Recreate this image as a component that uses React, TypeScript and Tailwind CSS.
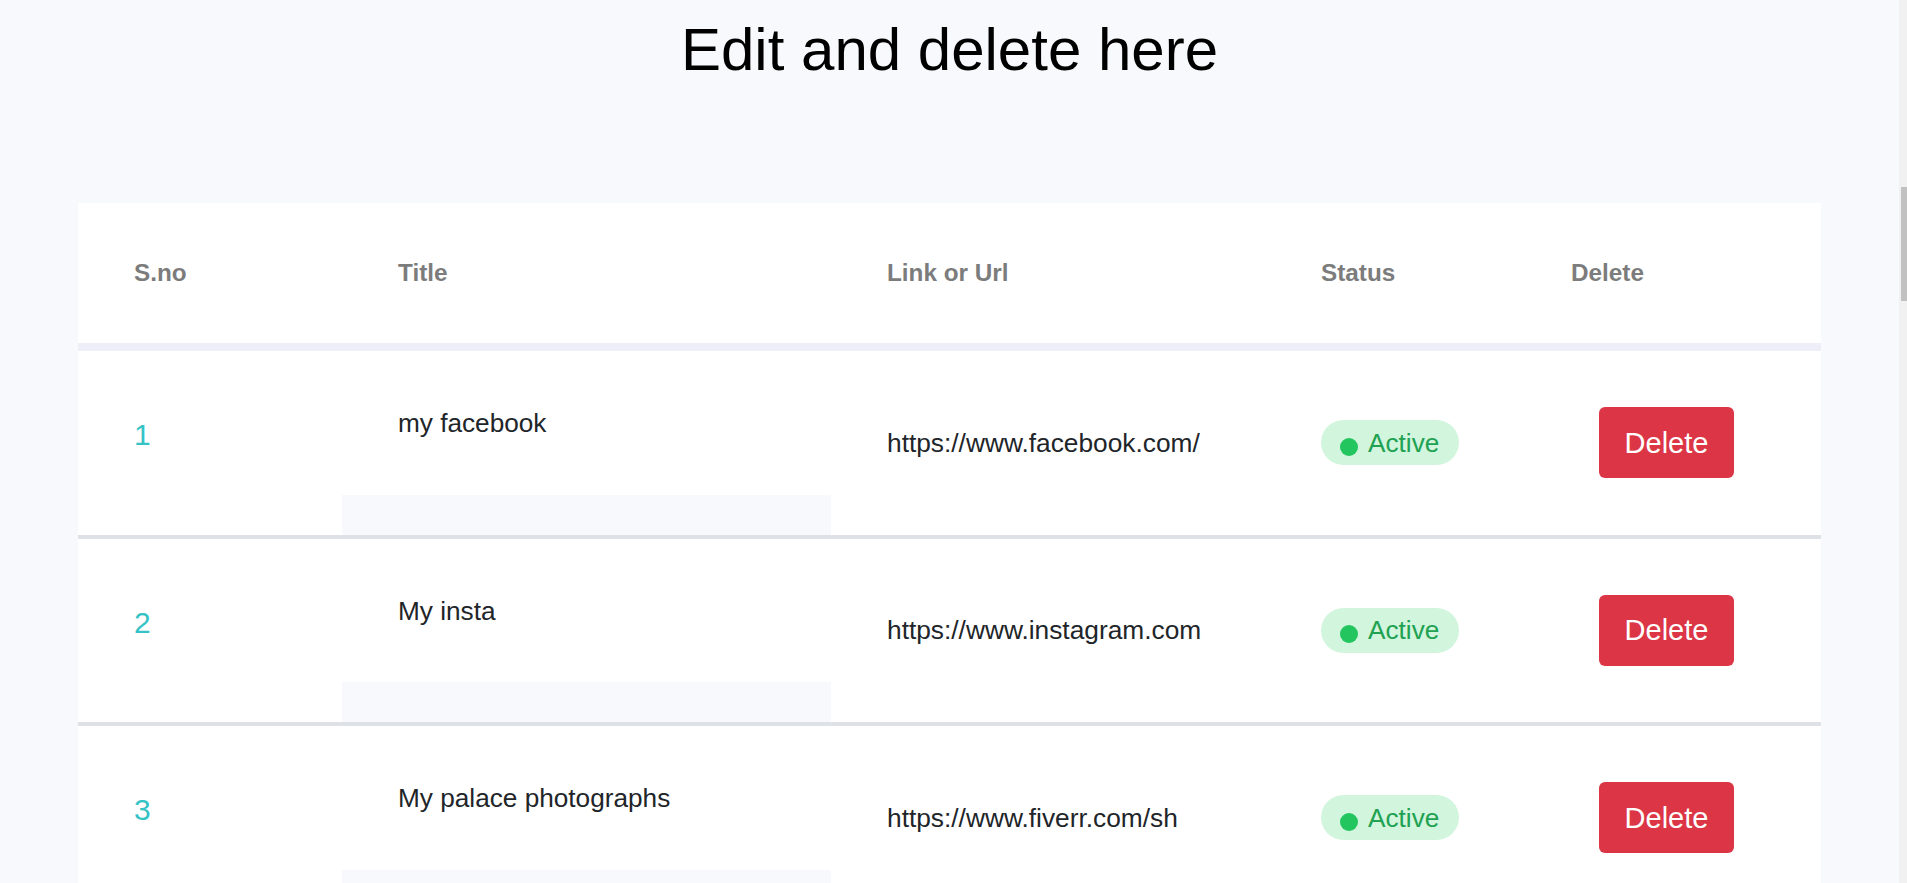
import React from "react";

const rows = [
  { n: 1, title: "my facebook", url: "https://www.facebook.com/" },
  { n: 2, title: "My insta", url: "https://www.instagram.com" },
  { n: 3, title: "My palace photographs", url: "https://www.fiverr.com/sh" },
];

export default function App() {
  return (
    <div className="flex h-[883px] overflow-hidden bg-[#f8f9fc] font-['Liberation_Sans',Arial,sans-serif]">
      <main className="min-w-0 flex-1">
        <h1 className="mt-[20px] text-center text-[60px] font-normal leading-[60px] text-black">
          Edit and delete here
        </h1>
        <div className="mx-[78px] mt-[123px] bg-white">
          <div className="grid h-[140px] grid-cols-[264px_489px_434px_250px_1fr] items-center text-[24.3px] font-bold leading-[30px] text-[#7c7c7c]">
            <div className="pl-[56px]">S.no</div>
            <div className="pl-[56px]">Title</div>
            <div className="pl-[56px]">Link or Url</div>
            <div className="pl-[56px]">Status</div>
            <div className="pl-[56px]">Delete</div>
          </div>
          <div className="h-[8px] bg-[#eceff8]" />
          {rows.map((r) => (
            <div
              key={r.n}
              className="grid h-[187.5px] grid-cols-[264px_489px_434px_250px_1fr] border-b-[4px] border-[#dee2e6]"
            >
              <div className="pl-[56px] pt-[69px] text-[30px] leading-[30px] text-[#35c3c6]">{r.n}</div>
              <div className="flex flex-col">
                <div className="pl-[56px] pt-[57px] text-[26.2px] leading-[30px] text-[#212529]">{r.title}</div>
                <div className="mt-auto h-[40px] bg-[#f8f9fc]" />
              </div>
              <div className="flex items-center pl-[56px] text-[26.3px] leading-[30px] text-[#212529]">{r.url}</div>
              <div className="flex items-center pl-[56px]">
                <span className="inline-flex h-[45px] items-center gap-[10px] rounded-full bg-[#d1f5dd] pl-[19px] pr-[20px]">
                  <span className="mt-[8px] h-[18px] w-[18px] rounded-full bg-[#22c55e]" />
                  <span className="text-[26.2px] leading-[30px] text-[#21a152]">Active</span>
                </span>
              </div>
              <div className="flex items-center justify-center pr-[3px]">
                <button className="h-[71px] w-[135px] rounded-[6px] bg-[#dc3545] text-[29px] leading-[30px] text-white">
                  Delete
                </button>
              </div>
            </div>
          ))}
        </div>
      </main>
      <div className="w-[8px] shrink-0 bg-[#f1f1f1]">
        <div className="ml-[2px] mt-[187px] h-[114px] w-[6px] bg-[#c1c1c1]" />
      </div>
    </div>
  );
}
